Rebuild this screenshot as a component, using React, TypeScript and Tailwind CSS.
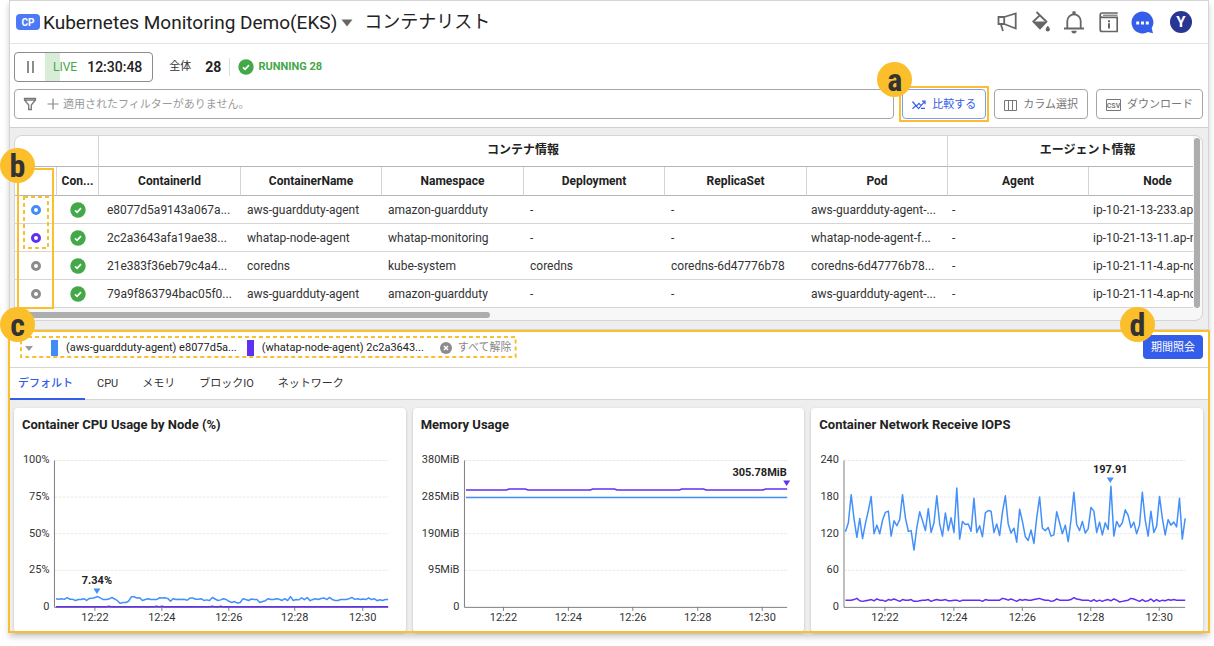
import React, { useState } from "react";

const CPU_BLUE = [
  5.5, 5.2, 5.5, 5.1, 6.3, 5.2, 5.1, 4.4, 5, 5, 5.6, 4.4, 5.7, 5.8, 6.4, 7, 6, 5, 5, 5.3, 6.4, 5.4, 4.2, 2.4, 3, 3, 3.8,
  6.8, 6.9, 6, 6.2, 4.4, 5, 5.6, 5, 5, 5, 6.2, 6, 6.2, 5.8, 3.8, 5.6, 5, 5.1, 5, 5.1, 4.5, 6, 6.1, 5.2, 5.2, 5.6, 4.4,
  4.8, 4.4, 6.4, 5.4, 4.4, 4.8, 5.5, 5, 3.8, 3, 3.6, 2.6, 3, 5.6, 5, 4.4, 5.4, 5, 5, 3, 3.6, 4.2, 5.6, 5, 5, 5.6, 5.2,
  4.4, 5.6, 4.2, 7, 4.4, 5, 4.8, 6.2, 4.9, 6.4, 4.2, 5, 5.6, 5, 5.7, 6.1, 5, 6.4, 5, 4.4, 4.3, 5, 5, 5, 5.6, 6.4, 5.1,
  5.6, 5, 5.4, 5, 6.2, 5, 5.6, 4.2, 4.9, 4.4, 5, 5,
];
const CPU_PURPLE = CPU_BLUE.map((_, i) => ([19, 36, 38, 56, 59].includes(i) ? 0.5 : 0));

const MEM_PURPLE = CPU_BLUE.map((_, i) =>
  (i >= 16 && i <= 22) || (i >= 47 && i <= 55) || (i >= 80 && i <= 88) || i >= 111 ? 305.78 : 303.6,
);
const MEM_BLUE = CPU_BLUE.map(() => 284);

const NET_BLUE = [
  123, 138, 184, 144, 114, 145, 112, 137, 158, 181, 120, 134, 120, 142, 155, 157, 116, 141, 133, 143, 184, 146, 124, 125,
  93, 130, 156, 141, 125, 161, 122, 138, 182, 136, 116, 154, 125, 146, 122, 195, 111, 140, 135, 136, 124, 178, 122, 133,
  115, 154, 158, 157, 122, 136, 117, 155, 182, 136, 121, 129, 106, 160, 140, 115, 109, 126, 104, 146, 180, 129, 125, 130,
  116, 118, 156, 138, 120, 134, 107, 142, 188, 135, 125, 140, 121, 128, 163, 157, 122, 139, 118, 138, 127, 197.91, 116,
  140, 131, 138, 159, 150, 130, 139, 120, 134, 188, 142, 116, 157, 122, 132, 181, 146, 118, 143, 134, 139, 131, 178, 111,
  145,
];
const NET_PURPLE = [
  11, 11, 11, 12, 14, 10, 9, 10, 11, 12, 10, 13, 11, 11, 9, 12, 11, 13, 11, 9, 12, 11, 11, 12, 9, 9, 10, 11, 11, 12, 9,
  11, 12, 11, 11, 12, 10, 10, 11, 11, 9, 11, 11, 11, 11, 11, 11, 11, 9, 12, 11, 11, 11, 11, 11, 14, 13, 11, 13, 11, 9,
  12, 11, 12, 11, 11, 12, 13, 14, 12, 11, 11, 9, 10, 13, 11, 11, 11, 11, 12, 15, 13, 12, 11, 11, 11, 9, 12, 9, 11, 9,
  11, 12, 10, 13, 11, 8, 9, 10, 11, 14, 13, 11, 9, 12, 9, 10, 13, 9, 12, 9, 11, 10, 12, 11, 12, 11, 11, 11, 11,
];

type Series = { color: string; values: number[] };
type ChartProps = {
  title: string;
  axisX: number;
  max: number;
  yLabels: string[];
  ticks: number[];
  series: Series[];
  marker: { label: string; x: number; y: number; color: string; anchor: "middle" | "end" };
};

const TIMES = ["12:22", "12:24", "12:26", "12:28", "12:30"];
const TOP = 14.5;
const BOTTOM = 161;
const RIGHT = 374.5;

function Chart({ title, axisX, max, yLabels, ticks, series, marker }: ChartProps) {
  const path = (values: number[]) =>
    values
      .map((v, i) => {
        const x = axisX + 1.5 + (i * (RIGHT - axisX - 1.5)) / (values.length - 1);
        const y = BOTTOM - (v / max) * (BOTTOM - TOP);
        return `${i ? "L" : "M"}${x.toFixed(1)} ${y.toFixed(1)}`;
      })
      .join("");
  return (
    <section className="min-w-0 flex-1 rounded bg-white shadow-[0_1px_3px_rgba(0,0,0,0.2)]">
      <h3 className="px-2 pt-2 text-[13px] leading-[18px] font-bold text-[#222]">{title}</h3>
      <svg viewBox="0 0 392 186" className="mt-3 block w-full" role="img" aria-label={title}>
        {yLabels.map((label, i) => {
          const y = TOP + (i * (BOTTOM - TOP)) / 4;
          return (
            <g key={label}>
              {i < 4 && <line x1={axisX} x2={RIGHT} y1={y} y2={y} stroke="#e9e9e9" strokeDasharray="3 1" />}
              <text x={axisX - 5} y={y + 3} textAnchor="end" fontSize="11" fill="#333">
                {label}
              </text>
            </g>
          );
        })}
        <path d={`M${axisX} ${TOP}V${BOTTOM + 0.5}H${RIGHT}`} fill="none" stroke="#808080" strokeWidth="1" />
        {ticks.map((x, i) => (
          <g key={x}>
            <line x1={x} x2={x} y1={BOTTOM} y2={BOTTOM + 4} stroke="#808080" />
            <text x={x} y="175.5" textAnchor="middle" fontSize="11" fill="#333">
              {TIMES[i]}
            </text>
          </g>
        ))}
        {series.map((s) => (
          <path
            key={s.color}
            d={path(s.values)}
            fill="none"
            stroke={s.color}
            strokeWidth="1.5"
            strokeLinejoin="round"
          />
        ))}
        <path d={`M${marker.x - 3.5} ${marker.y - 5}h7l-3.5 5.5z`} fill={marker.color} />
        <text
          x={marker.x}
          y={marker.y - 9}
          textAnchor={marker.anchor}
          fontSize="11"
          fontWeight="700"
          fill="#222"
        >
          {marker.label}
        </text>
      </svg>
    </section>
  );
}

function Check() {
  return (
    <svg viewBox="0 0 16 16" className="block size-4" aria-hidden="true">
      <circle cx="8" cy="8" r="7.7" fill="#43a847" />
      <path d="M5 8.3l2.1 2L11 6.2" fill="none" stroke="#fff" strokeWidth="1.7" />
    </svg>
  );
}

function Badge({ children, className }: { children: string; className: string }) {
  return (
    <span
      className={`pointer-events-none absolute z-20 flex size-[35px] items-center justify-center rounded-full bg-[#fabf2b] font-['Roboto_Condensed','Liberation_Sans_Narrow','Roboto',sans-serif] text-[32px] leading-none font-bold text-[#333] ${className}`}
    >
      {children}
    </span>
  );
}

function DashedBox({ className }: { className: string }) {
  return (
    <svg className={`pointer-events-none absolute ${className}`} aria-hidden="true">
      <rect
        x="1"
        y="1"
        className="h-[calc(100%-2px)] w-[calc(100%-2px)]"
        fill="none"
        stroke="#fabf2b"
        strokeWidth="2"
        strokeDasharray="4 3"
      />
    </svg>
  );
}

const COLUMNS = [
  "ContainerId",
  "ContainerName",
  "Namespace",
  "Deployment",
  "ReplicaSet",
  "Pod",
  "Agent",
  "Node",
];

const ROWS = [
  {
    ring: "border-[#418cf5]",
    cells: ["e8077d5a9143a067a...", "aws-guardduty-agent", "amazon-guardduty", "-", "-", "aws-guardduty-agent-...", "-", "ip-10-21-13-233.ap"],
  },
  {
    ring: "border-[#6030f0]",
    cells: ["2c2a3643afa19ae38...", "whatap-node-agent", "whatap-monitoring", "-", "-", "whatap-node-agent-f...", "-", "ip-10-21-13-11.ap-n"],
  },
  {
    ring: "border-[#8c8c8c]",
    cells: ["21e383f36eb79c4a4...", "coredns", "kube-system", "coredns", "coredns-6d47776b78", "coredns-6d47776b78...", "-", "ip-10-21-11-4.ap-no"],
  },
  {
    ring: "border-[#8c8c8c]",
    cells: ["79a9f863794bac05f0...", "aws-guardduty-agent", "amazon-guardduty", "-", "-", "aws-guardduty-agent-...", "-", "ip-10-21-11-4.ap-no"],
  },
];

const TABS = ["デフォルト", "CPU", "メモリ", "ブロックIO", "ネットワーク"];

function Header() {
  return (
    <header className="flex h-[43px] items-center border-b border-[#e4e4e4] pr-4 pl-1.5">
      <span className="flex h-4 w-6 items-center justify-center rounded bg-[#4d79f6] text-[10px] font-bold text-white">
        CP
      </span>
      <button className="ml-[3px] flex items-center pt-0.5 text-[19px] leading-6 text-[#222]">
        Kubernetes Monitoring Demo(EKS)
        <svg viewBox="0 0 12 8" className="ml-1 h-2 w-3" aria-hidden="true">
          <path d="M.5.5h11L6 7.5z" fill="#666" />
        </svg>
      </button>
      <h1 className="ml-[11px] text-[18px] leading-6 text-[#222]">コンテナリスト</h1>
      <div className="ml-auto flex items-center">
        <button aria-label="お知らせ" className="mr-3.5">
          <svg viewBox="0 0 20 20" className="size-5" fill="none" stroke="#666" strokeWidth="1.8">
            <path d="M1.5 5H7.2V12H1.5zM7.2 5L18.7 1.5V16.5L7.2 12M3.8 12L6 19" />
          </svg>
        </button>
        <button aria-label="テーマ" className="mr-3">
          <svg viewBox="0 0 20 22" className="h-[22px] w-5">
            <path d="M5.5 1L15.8 11M9 4.2L1.8 11" fill="none" stroke="#666" strokeWidth="1.8" />
            <path d="M1 10.5H16.8L9 18.8z" fill="#666" />
            <path d="M16.8 14.8c1.3 1.6 2.1 2.5 2.1 3.6a2.1 2.1 0 0 1-4.2 0c0-1.1.8-2 2.1-3.6z" fill="#666" />
          </svg>
        </button>
        <button aria-label="通知" className="mr-3.5">
          <svg viewBox="0 0 22 24" className="h-6 w-[22px]" fill="none" stroke="#666" strokeWidth="1.8">
            <path d="M1 18.5H21M4.3 18.5V11a6.7 6.7 0 0 1 13.4 0V18.5" />
            <path d="M9.6 1.2h2.8l.4 3H9.2zM8.4 20.8h5.2a2.6 2.6 0 0 1-5.2 0z" fill="#666" stroke="none" />
          </svg>
        </button>
        <button aria-label="ガイド" className="mr-3">
          <svg viewBox="0 0 20 22" className="h-[22px] w-5" fill="none" stroke="#666" strokeWidth="1.7">
            <path d="M18.8 2H3.2Q1.2 2 1.2 4.2V18.5Q1.2 20.5 3 20.5H18.2V6.3H3.2Q1.2 6.3 1.2 4.2" />
            <path d="M4 4.2h14.5" strokeWidth="1.1" />
            <path d="M10 9.2v2M10 12.3v5.2" strokeWidth="2" />
          </svg>
        </button>
        <button aria-label="チャット" className="mr-4">
          <svg viewBox="0 0 23 23" className="size-[23px]">
            <path d="M11.5.5a11 11 0 1 0 5.4 20.6l5.1 1.2-1.3-5A11 11 0 0 0 11.5.5z" fill="#345de9" />
            <path d="M5.2 10.5h3v3h-3zM10 10.5h3v3h-3zM14.8 10.5h3v3h-3z" fill="#fff" />
          </svg>
        </button>
        <button className="flex size-[22px] items-center justify-center rounded-full bg-[#283593] text-[15px] leading-none font-bold text-white">
          Y
        </button>
      </div>
    </header>
  );
}

function Toolbar() {
  const outline = "flex h-[30px] items-center gap-1.5 rounded border bg-white px-[9px] pt-0.5 text-[11px]";
  return (
    <div className="flex flex-col gap-[7px] border-b border-[#d0d0d0] pt-2 pr-[5px] pb-2 pl-1">
      <div className="flex h-[30px] items-center">
        <div className="flex h-full items-center rounded border border-[#8c8c8c] pr-2.5">
          <button
            aria-label="一時停止"
            className="flex h-full w-[30px] items-center justify-center gap-[3px]"
          >
            <i className="h-3 w-0.5 bg-[#8c8c8c]" />
            <i className="h-3 w-0.5 bg-[#8c8c8c]" />
          </button>
          <div className="flex h-full items-center bg-[linear-gradient(#d8edd8,#d8edd8)] bg-[length:15px_100%] bg-no-repeat pl-2">
            <span className="text-xs text-[#43a847]">LIVE</span>
            <time className="ml-2.5 text-[14px] font-medium text-[#222]">12:30:48</time>
          </div>
        </div>
        <span className="ml-4 text-[11px] text-[#333]">全体</span>
        <span className="ml-3.5 text-[14px] font-bold text-[#222]">28</span>
        <span className="mr-2 ml-2 h-[18px] w-px bg-[#ddd]" />
        <Check />
        <span className="ml-1 text-[11px] font-bold text-[#43a847]">RUNNING 28</span>
      </div>
      <div className="flex items-center">
        <label className="flex h-[30px] flex-1 items-center rounded border border-[#a6a6a6] pl-2">
          <svg viewBox="0 0 14 14" className="size-3.5" fill="none" stroke="#777" strokeWidth="1.3">
            <path d="M1.5 1.5H12.5V3L8.3 8V12.5H5.7V8L1.5 3zM1.5 3.2H12.5" />
          </svg>
          <svg viewBox="0 0 12 12" className="ml-2.5 size-3" stroke="#888" strokeWidth="1.2">
            <path d="M6 .5v11M.5 6h11" />
          </svg>
          <input
            aria-label="フィルター"
            placeholder="適用されたフィルターがありません。"
            className="ml-1 min-w-0 flex-1 pt-0.5 text-[11px] outline-none placeholder:text-[#999]"
          />
        </label>
        <div className="relative ml-2">
          <button className={`${outline} border-[#7f9cf5] text-[#345de9]`}>
            <svg viewBox="0 0 14 10" className="h-2.5 w-3.5" fill="none" stroke="currentColor" strokeWidth="1.2">
              <path d="M.5 1.5L4.3 6.2 7 3.4 9 5.6 12.7 1.6M10 1.2h3v3M.5 8.8L4 5.6 6.5 8.6 8.6 6.4M9 8.3h4" />
            </svg>
            比較する
          </button>
          <span className="pointer-events-none absolute -inset-[3px] border-2 border-[#fabf2b]" />
          <Badge className="bottom-[22px] -left-[25px]">a</Badge>
        </div>
        <button className={`${outline} ml-2 border-[#a6a6a6] text-[#777]`}>
          <svg viewBox="0 0 13 11" className="h-[11px] w-[13px]" fill="none" stroke="currentColor">
            <path d="M.5.5h12v10H.5zM4.5.5v10M8.5.5v10" />
          </svg>
          カラム選択
        </button>
        <button className={`${outline} ml-2 border-[#a6a6a6] text-[#777]`}>
          <svg viewBox="0 0 15 12" className="h-3 w-[15px]" fill="none" stroke="currentColor">
            <path d="M.5.5h14v11H.5z" />
            <text x="7.5" y="8.5" textAnchor="middle" fontSize="7" fontWeight="700" stroke="none" fill="currentColor">
              CSV
            </text>
          </svg>
          ダウンロード
        </button>
      </div>
    </div>
  );
}

function ContainerTable() {
  const head = "h-[29px] border-r border-b border-r-[#d5d5d5] border-b-[#b5b5b5] p-0";
  return (
    <div className="border-b border-[#d5d5d5] bg-[#eee] pt-[7px] pr-[5px] pb-2 pl-1">
      <div className="relative rounded-lg border border-[#d5d5d5] bg-[#f7f7f7]">
        <div className="flex">
          <div className="min-w-0 flex-1 overflow-hidden rounded-tl-lg bg-white">
            <table className="w-[1212px] table-fixed border-separate border-spacing-0 text-xs text-[#333]">
              <colgroup>
                <col className="w-[42px]" />
                <col className="w-[42px]" />
                <col className="w-[142px]" />
                <col className="w-[141px]" />
                <col className="w-[142px]" />
                <col className="w-[141px]" />
                <col className="w-[142px]" />
                <col className="w-[141px]" />
                <col className="w-[141px]" />
                <col />
              </colgroup>
              <thead className="text-[#222]">
                <tr>
                  <th colSpan={2} className="h-[31px] border-r border-b border-r-[#d5d5d5] border-b-[#b5b5b5]" />
                  <th colSpan={6} className="h-[31px] border-r border-b border-r-[#d5d5d5] border-b-[#b5b5b5] p-0 pb-0.5">
                    コンテナ情報
                  </th>
                  <th colSpan={2} className="h-[31px] border-b border-b-[#b5b5b5] p-0 pb-0.5">
                    エージェント情報
                  </th>
                </tr>
                <tr>
                  <th className={head} />
                  <th className={head}>Con...</th>
                  {COLUMNS.map((c) => (
                    <th key={c} className={head}>
                      {c}
                    </th>
                  ))}
                </tr>
              </thead>
              <tbody>
                {ROWS.map((r, i) => (
                  <tr key={i}>
                    <td className="h-7 border-b border-[#d5d5d5] p-0">
                      <input
                        type="checkbox"
                        defaultChecked={i < 2}
                        aria-label={r.cells[0]}
                        className={`mx-auto block size-2.5 appearance-none rounded-full border-[3px] bg-white ${r.ring}`}
                      />
                    </td>
                    <td className="h-7 border-b border-[#d5d5d5] p-0">
                      <div className="flex justify-center">
                        <Check />
                      </div>
                    </td>
                    {r.cells.map((c, j) => (
                      <td
                        key={j}
                        className={`h-7 border-b border-[#d5d5d5] p-0 whitespace-nowrap ${j === 0 ? "pl-2" : j < 5 ? "pl-1.5" : "pl-1"}`}
                      >
                        {c}
                      </td>
                    ))}
                  </tr>
                ))}
              </tbody>
            </table>
          </div>
          <div className="w-[9px] rounded-tr-lg bg-[#f7f7f7] pt-0.5 pl-px">
            <div className="h-[170px] w-1.5 rounded-sm bg-[#adadad]" />
          </div>
        </div>
        <div className="flex h-3 items-end pb-0.5">
          <div className="h-1.5 w-2/5 rounded-sm bg-[#adadad]" />
        </div>
        <span className="pointer-events-none absolute top-8 left-0.5 h-[141px] w-[37px] border-2 border-[#fabf2b]" />
        <DashedBox className="top-[60px] left-2 h-[53px] w-[26px]" />
        <Badge className="top-3 -left-[15px]">b</Badge>
      </div>
    </div>
  );
}

export default function App() {
  const [tab, setTab] = useState(0);
  return (
    <div className="bg-white pr-[5px] pb-3 pl-[9px] font-['Roboto','Noto_Sans_CJK_JP',sans-serif]">
      <main className="border border-[#d5d5d5] shadow-[0_4px_6px_rgba(0,0,0,0.2)]">
        <Header />
        <Toolbar />
        <ContainerTable />
        <div className="relative bg-[#eee]">
          <div className="flex h-[38px] items-center border-b border-[#d5d5d5] bg-white pr-[5px] pb-[3px] pl-[11px] text-[11px] text-[#222]">
            <div className="relative flex h-5 items-center pt-0.5 pr-1">
              <button aria-label="折りたたむ" className="flex w-4 justify-center">
                <svg viewBox="0 0 8 5" className="h-[5px] w-2" aria-hidden="true">
                  <path d="M0 0h8L4 5z" fill="#999" />
                </svg>
              </button>
              <i className="ml-3.5 h-4 w-[7px] bg-[#418cf5]" />
              <span className="ml-2">(aws-guardduty-agent) e8077d5a...</span>
              <i className="ml-2.5 h-4 w-[7px] bg-[#6030f0]" />
              <span className="ml-2">(whatap-node-agent) 2c2a3643...</span>
              <button className="ml-4 flex items-center gap-1.5 text-[#888]">
                <svg viewBox="0 0 12 12" className="size-3" aria-hidden="true">
                  <circle cx="6" cy="6" r="6" fill="#8c8c8c" />
                  <path d="M4 4l4 4M8 4L4 8" stroke="#fff" strokeWidth="1.5" />
                </svg>
                すべて解除
              </button>
              <DashedBox className="-top-px -left-px h-[calc(100%+2px)] w-[calc(100%+2px)]" />
            </div>
            <button className="ml-auto h-6 rounded bg-[#345de9] px-2 pt-0.5 text-[11px] text-white">期間照会</button>
          </div>
          <nav className="flex h-8 border-b border-[#d5d5d5] bg-white text-[11px] text-[#333]">
            {TABS.map((t, i) => (
              <button
                key={t}
                onClick={() => setTab(i)}
                className={
                  i === tab
                    ? "-mb-px border-b-2 border-[#345de9] px-2 pt-0.5 pr-3 font-medium text-[#345de9]"
                    : "-mb-px border-b-2 border-transparent px-3 pt-0.5"
                }
              >
                {t}
              </button>
            ))}
          </nav>
          <div className="flex gap-[7px] pt-2 pr-[5px] pl-1">
            <Chart
              title="Container CPU Usage by Node (%)"
              axisX={40.5}
              max={100}
              yLabels={["100%", "75%", "50%", "25%", "0"]}
              ticks={[81, 148, 215, 281, 349]}
              series={[
                { color: "#6030f0", values: CPU_PURPLE },
                { color: "#4390fb", values: CPU_BLUE },
              ]}
              marker={{ label: "7.34%", x: 83, y: 147.5, color: "#4390fb", anchor: "middle" }}
            />
            <Chart
              title="Memory Usage"
              axisX={51.5}
              max={380}
              yLabels={["380MiB", "285MiB", "190MiB", "95MiB", "0"]}
              ticks={[90.5, 155.5, 220, 285, 349.5]}
              series={[
                { color: "#6030f0", values: MEM_PURPLE },
                { color: "#4390fb", values: MEM_BLUE },
              ]}
              marker={{ label: "305.78MiB", x: 374, y: 39.5, color: "#6030f0", anchor: "end" }}
            />
            <Chart
              title="Container Network Receive IOPS"
              axisX={33}
              max={240}
              yLabels={["240", "180", "120", "60", "0"]}
              ticks={[74, 143, 211.5, 280, 348.5]}
              series={[
                { color: "#4390fb", values: NET_BLUE },
                { color: "#6030f0", values: NET_PURPLE },
              ]}
              marker={{ label: "197.91", x: 299.5, y: 36.5, color: "#4390fb", anchor: "middle" }}
            />
          </div>
          <span className="pointer-events-none absolute -inset-x-0.5 top-0 -bottom-px z-10 border-2 border-[#fabf2b]" />
          <Badge className="-top-[23px] -left-[10px]">c</Badge>
          <Badge className="-top-[23px] right-[53px]">d</Badge>
        </div>
      </main>
    </div>
  );
}
